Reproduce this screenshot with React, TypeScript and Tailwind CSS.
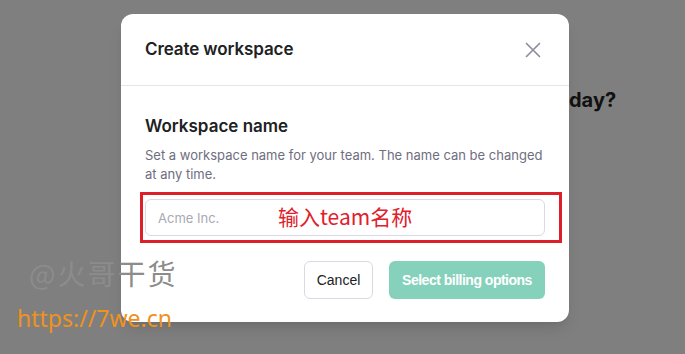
import React from 'react';

const sans = "font-['Inter','Liberation_Sans',sans-serif]";

const App: React.FC = () => {
  return (
    <div className={`relative w-[685px] h-[354px] overflow-hidden bg-[#7f7f7f] ${sans}`}>
      {/* page behind the overlay */}
      <div className="absolute left-[569px] top-[90px] text-[20px] font-bold text-[#111] leading-none">day?</div>

      <div className="relative pl-[121px] pt-[14px]">
        <div className="w-[448px] h-[308px] rounded-xl bg-white shadow-lg flex flex-col">
          <div className="h-[72px] flex items-center justify-between pl-6 pr-[26px] border-b border-[#e5e5e5]">
            <h2 className="text-[17px] font-semibold text-[#202123] tracking-[-0.1px]">Create workspace</h2>
            <button className="w-5 h-5 flex items-center justify-center text-[#8e8ea0]">
              <svg width="16" height="16" viewBox="0 0 16 16" fill="none" stroke="currentColor" strokeWidth="1.7" strokeLinecap="round">
                <path d="M1.5 1.5l13 13M14.5 1.5l-13 13" />
              </svg>
            </button>
          </div>

          <div className="px-6 pt-[28px]">
            <div className="text-[17px] font-semibold text-[#202123] leading-6">Workspace name</div>
            <p className="mt-[8px] text-[13px] leading-[19px] text-[#6e6e80]">
              Set a workspace name for your team. The name can be changed at any time.
            </p>
            <div className="relative mt-[15px]">
              <input
                placeholder="Acme Inc."
                className="w-full h-[37px] rounded-md border border-[#d9d9e3] px-3 text-[13px] text-[#202123] placeholder:text-[#a9a9b3] outline-none"
              />
              <div className="pointer-events-none absolute -left-[5px] -right-[17px] -top-[7px] -bottom-[7px] border-[3px] border-[#dd1f2a]"></div>
              <div className="pointer-events-none absolute left-[133px] top-[3px] text-[21px] leading-[28px] text-[#e0202b] font-['Noto_Sans_CJK_SC','Noto_Sans',sans-serif]">
                输入team名称
              </div>
            </div>
            <div className="mt-[25px] flex justify-end gap-4">
              <button className="h-[38px] w-[69px] rounded-md border border-[#d9d9e3] text-[14px] text-[#202123] font-['Liberation_Sans',sans-serif]">
                Cancel
              </button>
              <button className="h-[38px] w-[156px] rounded-md bg-[#86d1bb] text-[14px] font-bold text-white tracking-[-0.5px] font-['Liberation_Sans',sans-serif]">
                Select billing options
              </button>
            </div>
          </div>
        </div>
      </div>

      {/* watermark */}
      <div className="absolute left-[29px] top-[255px] text-[28px] leading-[36px] tracking-[2px] text-[#8c8c8c] font-['Noto_Sans_CJK_SC','Noto_Sans',sans-serif]">
        @火哥干货
      </div>
      <div className="absolute left-[17px] top-[303px] text-[23px] leading-[30px] text-[#f0921d] font-['Noto_Sans','Open_Sans',sans-serif]">
        https://7we.cn
      </div>
    </div>
  );
};

export default App;
